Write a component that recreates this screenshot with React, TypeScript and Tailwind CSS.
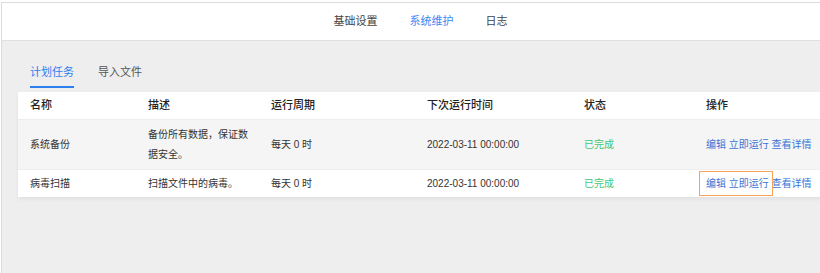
import React from 'react';

const font = { fontFamily: '"Liberation Sans", "Noto Sans CJK SC", sans-serif' };

const rows = [
    { name: '系统备份', desc: '备份所有数据，保证数据安全。', cycle: '每天 0 时', next: '2022-03-11 00:00:00', status: '已完成' },
    { name: '病毒扫描', desc: '扫描文件中的病毒。', cycle: '每天 0 时', next: '2022-03-11 00:00:00', status: '已完成' },
];

// orange highlight frame drawn over the first two action links
const Highlight: React.FC = () => (
    <svg className="absolute left-[5px] top-[1px] pointer-events-none" width="74" height="25" viewBox="0 0 74 25">
        <rect x="0.5" y="0.5" width="73" height="24" fill="none" stroke="#f7a35c" strokeWidth="1" />
    </svg>
);

const App: React.FC = () => {
    return (
        <div className="w-[820px] h-[273px] overflow-hidden bg-white" style={font}>
            <div className="ml-px mt-[2px] w-[838px] h-[271px] border-l border-t border-[#dcdcdc] bg-[#eeeeee]">
                <div className="h-[38px] bg-white border-b border-[#e0e0e0] flex items-center justify-center text-[11px] text-[#444]">
                    <span className="px-4">基础设置</span>
                    <span className="px-4 text-[#3f87f5]">系统维护</span>
                    <span className="px-4">日志</span>
                </div>

                <div className="px-4">
                    <div className="flex gap-6 pl-3 pt-[23px] text-[11px] text-[#555]">
                        <div className="text-[#2d7ff0] border-b-2 border-[#2d7ff0] pb-[6px] leading-[16px]">计划任务</div>
                        <div className="leading-[16px]">导入文件</div>
                    </div>

                    <div className="mt-[4px] bg-white shadow-[0_2px_4px_rgba(0,0,0,0.06)] text-[10px] text-[#333]">
                        <div className="flex h-[27px] items-center font-medium text-[11px] text-[#222]">
                            <div className="w-[118px] pl-3">名称</div>
                            <div className="w-[123px] pl-3">描述</div>
                            <div className="w-[156px] pl-3">运行周期</div>
                            <div className="w-[157px] pl-3">下次运行时间</div>
                            <div className="w-[122px] pl-3">状态</div>
                            <div className="flex-1 pl-3">操作</div>
                        </div>
                        {rows.map((r, i) => (
                            <div
                                key={r.name}
                                className={`flex items-center border-t border-[#eeeeee] ${i === 0 ? 'bg-[#f5f5f5] h-[50px]' : 'bg-white h-[28px]'}`}
                            >
                                <div className="w-[118px] pl-3">{r.name}</div>
                                <div className="w-[123px] pl-3 pr-2 leading-[20px]">{r.desc}</div>
                                <div className="w-[156px] pl-3">{r.cycle}</div>
                                <div className="w-[157px] pl-3">{r.next}</div>
                                <div className="w-[122px] pl-3 text-[#3cc878]">{r.status}</div>
                                <div className="relative flex-1 h-full flex items-center pl-3 whitespace-nowrap text-[#3b73d4]">
                                    <span>编辑</span>&nbsp;<span>立即运行</span>&nbsp;<span>查看详情</span>
                                    {i === 1 && <Highlight />}
                                </div>
                            </div>
                        ))}
                    </div>
                </div>
            </div>
        </div>
    );
};

export default App;
